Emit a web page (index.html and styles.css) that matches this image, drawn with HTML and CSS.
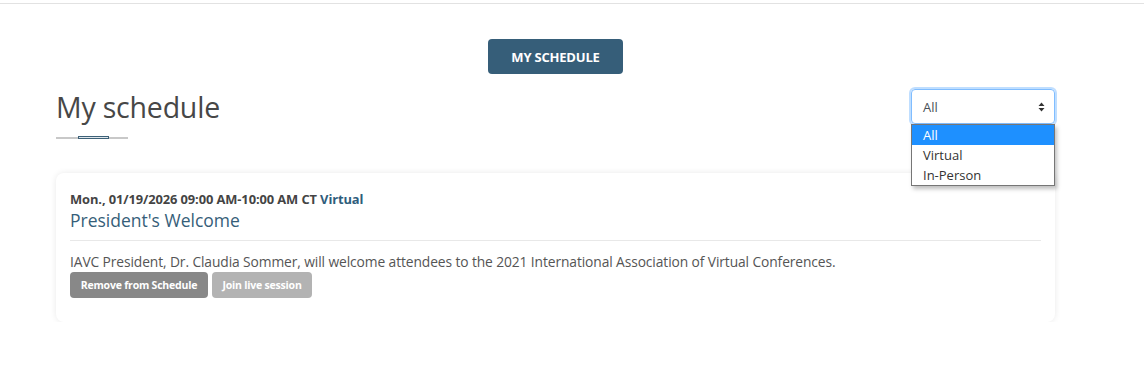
FILE: index.html
```html
<!DOCTYPE html>
<html>
<head>
<meta charset="utf-8">
<link rel="stylesheet" href="styles.css">
</head>
<body>
<div class="topline"></div>
<main class="page">
  <div class="btn-row">
    <button class="btn-primary">MY SCHEDULE</button>
  </div>
  <div class="head-row">
    <div class="title-block">
      <h1 class="title">My schedule</h1>
      <div class="title-rule"><span class="rule-mark"></span></div>
    </div>
    <div class="filter">
      <div class="select">
        <span>All</span>
        <svg class="caret" width="7" height="10" viewBox="0 0 7 10"><path d="M3.5 0.5 L6.5 4 H0.5 Z M3.5 9.5 L6.5 6 H0.5 Z" fill="#333"/></svg>
      </div>
      <ul class="dropdown">
        <li class="opt active">All</li>
        <li class="opt">Virtual</li>
        <li class="opt">In-Person</li>
      </ul>
    </div>
  </div>
  <section class="card">
    <div class="meta">Mon., 01/19/2026 09:00 AM-10:00 AM CT <span class="type">Virtual</span></div>
    <h2 class="session-title">President's Welcome</h2>
    <hr class="divider">
    <p class="desc">IAVC President, Dr. Claudia Sommer, will welcome attendees to the 2021 International Association of Virtual Conferences.</p>
    <div class="actions">
      <button class="btn-sm btn-remove">Remove from Schedule</button>
      <button class="btn-sm btn-join">Join live session</button>
    </div>
  </section>
</main>
</body>
</html>
```

FILE: styles.css
```css
* { box-sizing: border-box; }
html, body { margin: 0; padding: 0; background: #fff; }
body { font-family: "Open Sans", "Noto Sans", sans-serif; color: #555; }

.topline { height: 4px; border-bottom: 1px solid #e2e2e2; }

.page { width: 999px; margin-left: 56px; }

.btn-row { display: flex; justify-content: center; padding-top: 35px; }
.btn-primary {
  width: 135px; height: 35px;
  background: #365e79; color: #fff; border: 0; border-radius: 4px;
  font-family: "Open Sans", sans-serif; font-weight: 700; font-size: 13px;
  letter-spacing: -0.2px;
}

.head-row { display: flex; justify-content: space-between; align-items: flex-start; margin-top: 15px; }
.title { margin: 0; font-weight: 400; font-size: 28.5px; line-height: 38px; color: #474747; letter-spacing: -0.2px; margin-top: -1px; }
.title-rule { position: relative; width: 72px; height: 2px; background: #c8c8c8; margin-top: 11px; }
.rule-mark { position: absolute; left: 22px; top: -1px; width: 31px; height: 3px; border: 1px solid #3d6178; background: #dfe6eb; }

.filter { position: relative; width: 144px; }
.select {
  height: 35px; border: 1px solid #80bdff; border-radius: 4px;
  box-shadow: 0 0 0 2px rgba(0,123,255,0.25);
  display: flex; align-items: center; justify-content: space-between;
  padding: 0 9px 0 11px; font-size: 13px; color: #495057;
}
.caret { display: block; }
.dropdown {
  position: absolute; left: 0; top: 35px; width: 144px; margin: 0; padding: 0;
  list-style: none; background: #fff; border: 1px solid #767676;
  box-shadow: 2px 3px 4px rgba(0,0,0,0.25);
  font-size: 13px; color: #333;
}
.opt { height: 20px; line-height: 20px; padding-left: 11px; }
.opt.active { background: #1e90ff; color: #fff; }

.card {
  margin-top: 34px; border-radius: 8px; background: #fff;
  box-shadow: 0 0 6px rgba(0,0,0,0.09);
  padding: 17px 14px 23px;
  height: 149px;
}
.meta { font-size: 12.9px; font-weight: 700; color: #444; line-height: 18px; letter-spacing: -0.1px; }
.type { color: #2f5d7c; }
.session-title { margin: 0; font-size: 17.5px; font-weight: 400; color: #365e79; line-height: 24px; }
.divider { border: 0; border-top: 1px solid #e8e8e8; margin: 8px 0 11px; }
.desc { margin: 0; font-size: 13.8px; color: #555; line-height: 20px; letter-spacing: -0.1px; }
.actions { display: flex; gap: 4px; }
.btn-sm {
  height: 26px; border: 0; border-radius: 4px; color: #fff;
  font-family: "Open Sans", sans-serif; font-weight: 700; font-size: 10.5px;
  padding: 0 10px; letter-spacing: -0.2px;
}
.btn-remove { background: #888; width: 138px; }
.btn-join { background: #b3b3b3; width: 100px; }
```
